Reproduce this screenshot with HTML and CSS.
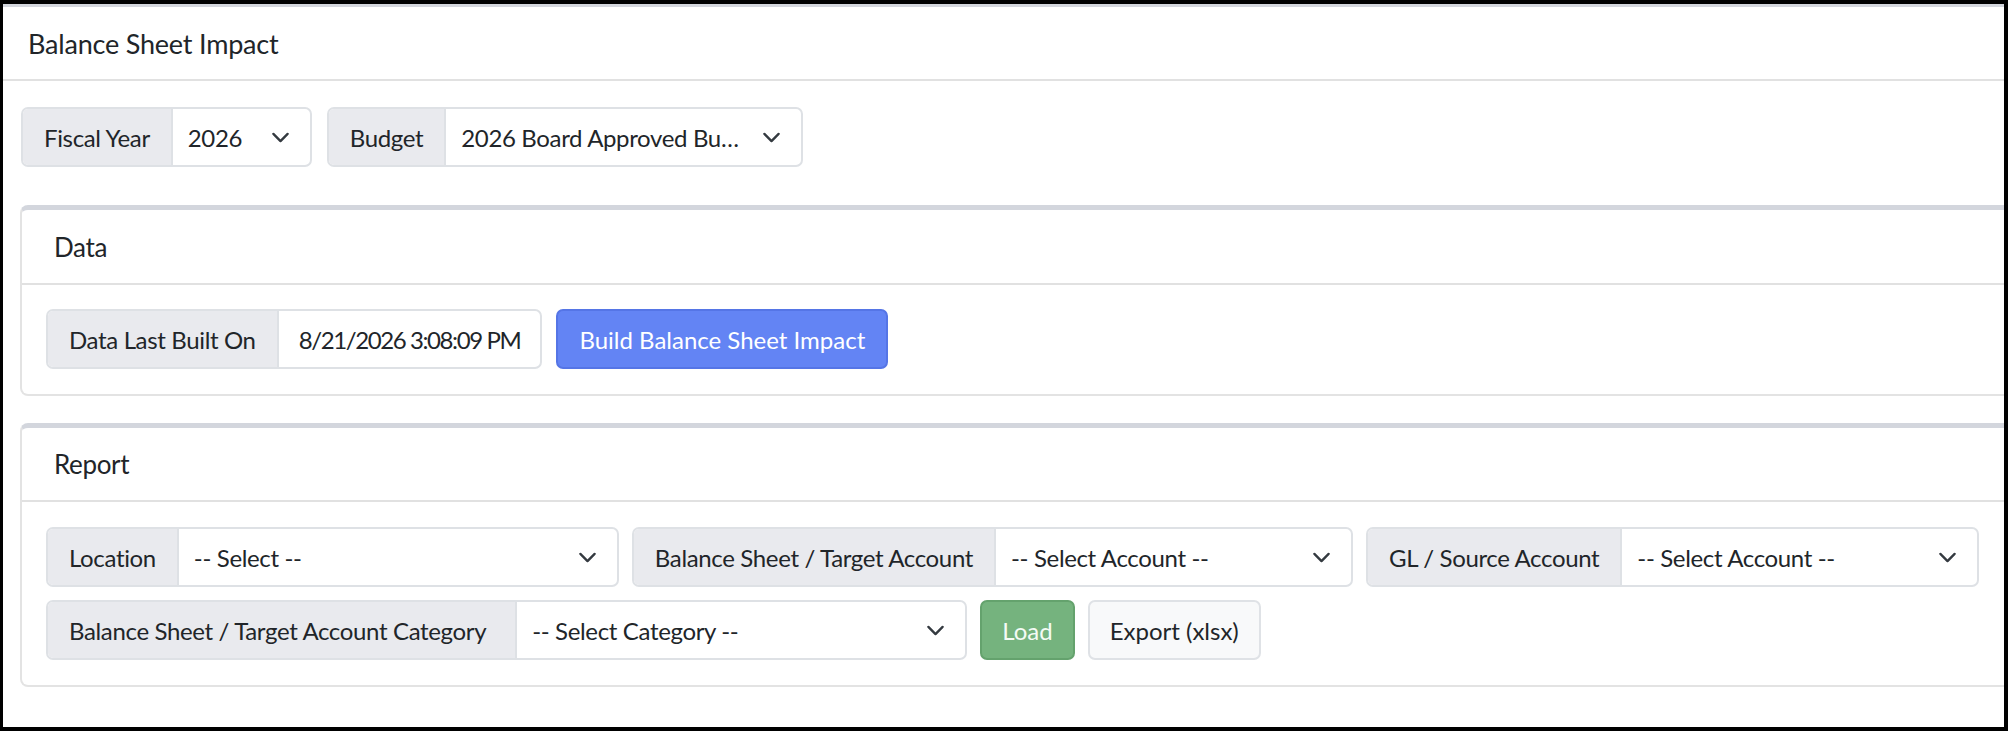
FILE: index.html
```html
<!DOCTYPE html>
<html lang="en">
<head>
<meta charset="utf-8">
<title>Balance Sheet Impact</title>
<link rel="stylesheet" href="styles.css">
</head>
<body>
<div class="frame">
  <section class="card-main">
    <header class="card-head card-head-main">Balance Sheet Impact</header>
    <div class="card-main-body">
      <div class="filters">
        <div class="group">
          <span class="group-label">Fiscal Year</span>
          <div class="picker picker-year">
            <span class="picker-text">2026</span>
            <svg class="chev" viewBox="0 0 16 16"><path d="M2 5l6 6 6-6"/></svg>
          </div>
        </div>
        <div class="group">
          <span class="group-label">Budget</span>
          <div class="picker picker-budget">
            <span class="picker-text">2026 Board Approved Budget</span>
            <svg class="chev" viewBox="0 0 16 16"><path d="M2 5l6 6 6-6"/></svg>
          </div>
        </div>
      </div>

      <section class="panel panel-data">
        <header class="card-head panel-head">Data</header>
        <div class="panel-body data-body">
          <div class="row row-data">
            <div class="group">
              <span class="group-label">Data Last Built On</span>
              <span class="group-value">8/21/2026 3:08:09 PM</span>
            </div>
            <button class="btn btn-primary btn-wide" type="button">Build Balance Sheet Impact</button>
          </div>
        </div>
      </section>

      <section class="panel panel-report">
        <header class="card-head panel-head">Report</header>
        <div class="panel-body report-body">
          <div class="row">
            <div class="group">
              <span class="group-label">Location</span>
              <div class="picker picker-location">
                <span class="picker-text">-- Select --</span>
                <svg class="chev" viewBox="0 0 16 16"><path d="M2 5l6 6 6-6"/></svg>
              </div>
            </div>
            <div class="group">
              <span class="group-label">Balance Sheet / Target Account</span>
              <div class="picker picker-account">
                <span class="picker-text">-- Select Account --</span>
                <svg class="chev" viewBox="0 0 16 16"><path d="M2 5l6 6 6-6"/></svg>
              </div>
            </div>
            <div class="group">
              <span class="group-label">GL / Source Account</span>
              <div class="picker picker-account">
                <span class="picker-text">-- Select Account --</span>
                <svg class="chev" viewBox="0 0 16 16"><path d="M2 5l6 6 6-6"/></svg>
              </div>
            </div>
          </div>
          <div class="row">
            <div class="group">
              <span class="group-label label-wide">Balance Sheet / Target Account Category</span>
              <div class="picker picker-category">
                <span class="picker-text">-- Select Category --</span>
                <svg class="chev" viewBox="0 0 16 16"><path d="M2 5l6 6 6-6"/></svg>
              </div>
            </div>
            <button class="btn btn-success" type="button">Load</button>
            <button class="btn btn-light" type="button">Export (xlsx)</button>
          </div>
        </div>
      </section>
    </div>
  </section>
</div>
</body>
</html>
```

FILE: styles.css
```css
* {
  box-sizing: border-box;
}

body {
  margin: 0;
  background: #ffffff;
  color: #212529;
  font-family: Lato, "Source Sans Pro", "Noto Sans", sans-serif;
  font-size: 24px;
  letter-spacing: -0.35px;
}

/* black frame around the page */
.frame {
  width: 2008px;
  height: 731px;
  border-style: solid;
  border-color: #000000;
  border-width: 4px 4px 4px 3px;
  overflow: hidden;
  background: #ffffff;
}

.card-main {
  width: 2100px;
  border-top: 3px solid #d3d6dd;
}

.card-head {
  display: flex;
  align-items: center;
  height: 74px;
  border-bottom: 2px solid #e1e1e1;
  font-size: 26px;
  font-weight: 400;
}

.card-head-main {
  padding-left: 25px;
  font-size: 27px;
  letter-spacing: -0.2px;
}

.card-main-body {
  padding: 26px 0 40px 17px;
}

.filters {
  display: flex;
  gap: 15px;
  margin-left: 1px;
  margin-bottom: 38px;
}

/* input group: grey label + field */
.group {
  display: flex;
  height: 60px;
  border: 2px solid #dee1e5;
  border-radius: 7px;
  overflow: hidden;
  background: #ffffff;
  flex: none;
}

.group-label {
  display: flex;
  align-items: center;
  padding: 0 21px;
  background: #e9eaee;
  border-right: 2px solid #dee1e5;
  white-space: nowrap;
}

.label-wide {
  padding: 0 29px 0 21px;
}

.group-value {
  display: flex;
  align-items: center;
  padding: 0 20px;
  white-space: nowrap;
  letter-spacing: -1.4px;
}

.picker {
  display: flex;
  align-items: center;
  padding: 0 20px 0 15px;
  gap: 10px;
}

.picker-text {
  flex: 1;
  min-width: 0;
  white-space: nowrap;
  overflow: hidden;
  text-overflow: ellipsis;
}

.chev {
  width: 19px;
  height: 19px;
  flex: none;
  fill: none;
  stroke: #343a40;
  stroke-width: 2;
  stroke-linecap: round;
  stroke-linejoin: round;
}

.picker-year { width: 137px; }
.picker-budget { width: 355px; gap: 17px; }
.picker-location { width: 438px; }
.picker-account { width: 355px; }
.picker-category { width: 448px; }

/* section cards */
.panel {
  width: 2060px;
  border: 2px solid #e3e3e3;
  border-top: 5px solid #d3d6dd;
  border-radius: 8px;
}

.panel + .panel {
  margin-top: 27px;
}

.panel-head {
  padding-left: 32px;
}

.panel-data .panel-head {
  height: 75px;
}

.panel-body {
  padding: 24px 24px 25px;
}

.report-body {
  display: flex;
  flex-direction: column;
  gap: 13px;
  padding-top: 25px;
}

.row {
  display: flex;
  gap: 13px;
}

.row-data {
  gap: 14px;
}

.btn {
  height: 60px;
  padding: 0 20px;
  border-radius: 7px;
  font: inherit;
  letter-spacing: 0;
  cursor: pointer;
}

.btn-wide {
  padding: 0 21px;
}

.btn-primary {
  background: #6384f4;
  border: 2px solid #5575e6;
  color: #ffffff;
}

.btn-success {
  background: #75b37e;
  border: 2px solid #64a26d;
  color: #f4fbf5;
}

.btn-light {
  background: #f8f9fa;
  border: 2px solid #dfe2e6;
  color: #212529;
}
```
